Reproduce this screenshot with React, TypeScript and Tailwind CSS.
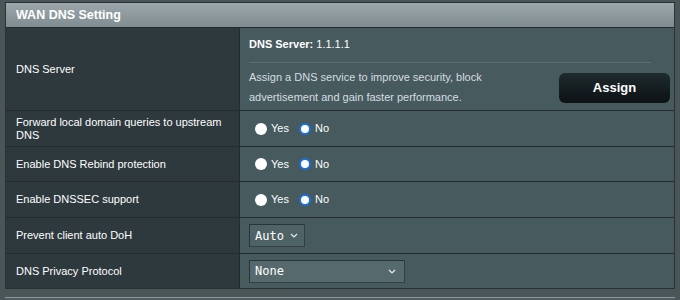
import React from "react";

const Radio = ({ checked }: { checked: boolean }) =>
  checked ? (
    <span className="inline-block w-[12px] h-[12px] rounded-full bg-white border-2 border-[#1a6fe0] box-border" />
  ) : (
    <span className="inline-block w-[12px] h-[12px] rounded-full bg-white" />
  );

const YesNo = () => (
  <div className="flex items-center text-[11px] text-white ml-[6px]">
    <Radio checked={false} />
    <span className="ml-[4px] mr-[10px]">Yes</span>
    <Radio checked={true} />
    <span className="ml-[4px]">No</span>
  </div>
);

const Chevron = () => (
  <svg width="8" height="5" viewBox="0 0 8 5" className="ml-auto">
    <path d="M1 1 L4 4 L7 1" fill="none" stroke="#e8eef0" strokeWidth="1.2" />
  </svg>
);

const Row = ({ label, children, h }: { label: React.ReactNode; children: React.ReactNode; h: string }) => (
  <div className={`flex border-t border-[#232b2e] ${h}`}>
    <div className="w-[234px] shrink-0 bg-[#2e393d] border-r border-[#232b2e] flex items-center pl-[10px] text-[11px] leading-[13px] text-white whitespace-nowrap">
      {label}
    </div>
    <div className="flex-1 bg-[#475a5e] flex items-center pl-[9px]">{children}</div>
  </div>
);

export default function App() {
  return (
    <div
      className="w-[680px] h-[300px] bg-[#4a5558] overflow-hidden pt-[2px] pl-[5px]"
      style={{ fontFamily: '"Liberation Sans", Arial, sans-serif' }}
    >
      <div className="w-[670px] border border-[#2a3235] bg-[#475a5e]">
        <div className="h-[24px] bg-gradient-to-b from-[#9ba7ab] to-[#7f8c90] flex items-center pl-[10px] text-[12.5px] font-bold text-white">
          WAN DNS Setting
        </div>
        <Row label="DNS Server" h="h-[83px]">
          <div className="flex flex-col h-full w-full pr-[4px]">
            <div className="text-[11px] font-bold text-white mt-[9px] leading-[14px]">
              DNS Server: <span className="font-normal">1.1.1.1</span>
            </div>
            <div className="h-px bg-[#2f3b3e] mt-[11px] w-[402px] border-b border-[#5d6d71]" />
            <div className="flex items-center mt-[4px]">
              <div className="text-[11px] leading-[20px] text-[#d6dde0] w-[300px]">
                Assign a DNS service to improve security, block advertisement and gain faster performance.
              </div>
              <button className="ml-auto mt-[1px] w-[111px] h-[30px] rounded-[6px] bg-gradient-to-b from-[#1f2b2f] to-[#0d1214] text-white text-[13px] font-bold">
                Assign
              </button>
            </div>
          </div>
        </Row>
        <Row label={<span>Forward local domain queries to upstream<br />DNS</span>} h="h-[36px]">
          <YesNo />
        </Row>
        <Row label="Enable DNS Rebind protection" h="h-[35px]">
          <YesNo />
        </Row>
        <Row label="Enable DNSSEC support" h="h-[36px]">
          <YesNo />
        </Row>
        <Row label="Prevent client auto DoH" h="h-[36px]">
          <div
            className="w-[56px] h-[23px] bg-[#4f6266] border border-[#33403f] border-t-[#2a3436] border-l-[#2a3436] flex items-center pl-[5px] pr-[6px] text-[12px] text-white"
            style={{ fontFamily: '"DejaVu Sans Mono", monospace' }}
          >
            Auto
            <Chevron />
          </div>
        </Row>
        <Row label="DNS Privacy Protocol" h="h-[35px]">
          <div
            className="w-[156px] h-[23px] bg-[#566a6e] border border-[#33403f] border-t-[#2a3436] border-l-[#2a3436] flex items-center pl-[5px] pr-[8px] text-[12px] text-white"
            style={{ fontFamily: '"DejaVu Sans Mono", monospace' }}
          >
            None
            <Chevron />
          </div>
        </Row>
      </div>
      <div className="mt-[8px] w-[670px] h-[10px] border-t border-[#8d999c] bg-[#4f5b5e]" />
    </div>
  );
}
